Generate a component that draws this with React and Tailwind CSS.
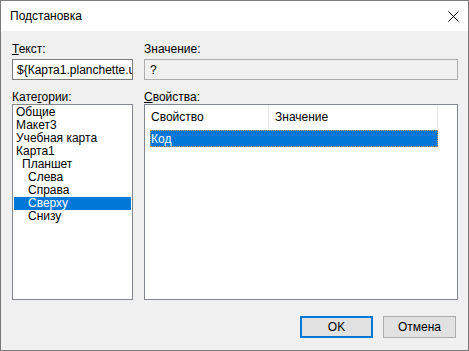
import React from 'react';

const categories = [
  { name: 'Общие', level: 0 },
  { name: 'Макет3', level: 0 },
  { name: 'Учебная карта', level: 0 },
  { name: 'Карта1', level: 0 },
  { name: 'Планшет', level: 1 },
  { name: 'Слева', level: 2 },
  { name: 'Справа', level: 2 },
  { name: 'Сверху', level: 2, selected: true },
  { name: 'Снизу', level: 2 },
];

const indent = ['pl-[2px]', 'pl-[8px]', 'pl-[14px]'];

const App = () => {
  return (
    <div
      className="w-[469px] h-[351px] border border-[#7a7a7a] flex flex-col bg-[#f0f0f0] text-[12px] text-black overflow-hidden"
      style={{ fontFamily: '"Liberation Sans", Arial, sans-serif' }}
    >
      {/* title bar */}
      <div className="h-[30px] bg-white flex items-center justify-between pl-[9px] pr-[9px] shrink-0">
        <span className="leading-[15px]">Подстановка</span>
        <svg width="11" height="11" viewBox="0 0 11 11" className="mt-[1px]">
          <path d="M0.5 0.5 L10.5 10.5 M10.5 0.5 L0.5 10.5" stroke="#000" strokeWidth="1" fill="none" />
        </svg>
      </div>

      <div className="flex-1 flex flex-col pl-[11px] pr-[10px]">
        {/* top row */}
        <div className="flex gap-[11px] mt-[11px]">
          <div className="w-[121px] flex flex-col">
            <div className="h-[14px] leading-[14px]"><u>Т</u>екст:</div>
            <div className="mt-[3px] h-[21px] border border-[#7a7a7a] bg-white flex items-center pl-[4px] overflow-hidden whitespace-nowrap">
              {'${Карта1.planchette.u'}
            </div>
          </div>
          <div className="w-[314px] flex flex-col">
            <div className="h-[14px] leading-[14px]">Значение:</div>
            <div className="mt-[3px] h-[21px] border border-[#adadad] bg-[#f0f0f0] flex items-center pl-[5px]">
              ?
            </div>
          </div>
        </div>

        {/* lists */}
        <div className="flex gap-[11px] mt-[10px]">
          <div className="w-[121px] flex flex-col">
            <div className="h-[14px] leading-[14px]">Кате<u>г</u>ории:</div>
            <div className="h-[196px] border border-[#828790] bg-white pt-[1px] px-[1px]">
              {categories.map((c) => (
                <div
                  key={c.name}
                  className={`h-[13px] leading-[13px] ${indent[c.level]} ${
                    c.selected ? 'bg-[#0078d7] text-white' : ''
                  }`}
                >
                  {c.name}
                </div>
              ))}
            </div>
          </div>
          <div className="w-[314px] flex flex-col">
            <div className="h-[14px] leading-[14px]"><u>С</u>войства:</div>
            <div className="h-[196px] border border-[#828790] bg-white">
              <div className="flex h-[24px] w-[293px]">
                <div className="w-[124px] border-r border-[#e5e5e5] flex items-center pl-[6px]">Свойство</div>
                <div className="flex-1 border-r border-[#e5e5e5] flex items-center pl-[6px]">Значение</div>
              </div>
              <div className="ml-[5px] mt-[1px] w-[288px] h-[17px] bg-[#0078d7] text-white border border-dotted border-[#ff9a30] flex items-center">
                Код
              </div>
            </div>
          </div>
        </div>

        {/* buttons */}
        <div className="flex justify-end gap-[10px] mt-[16px] pr-[2px]">
          <button className="w-[73px] h-[22px] border-2 border-[#0078d7] bg-[#e1e1e1] flex items-center justify-center leading-none">
            OK
          </button>
          <button className="w-[73px] h-[22px] border border-[#adadad] bg-[#e1e1e1] flex items-center justify-center leading-none">
            Отмена
          </button>
        </div>
      </div>
    </div>
  );
};

export default App;
